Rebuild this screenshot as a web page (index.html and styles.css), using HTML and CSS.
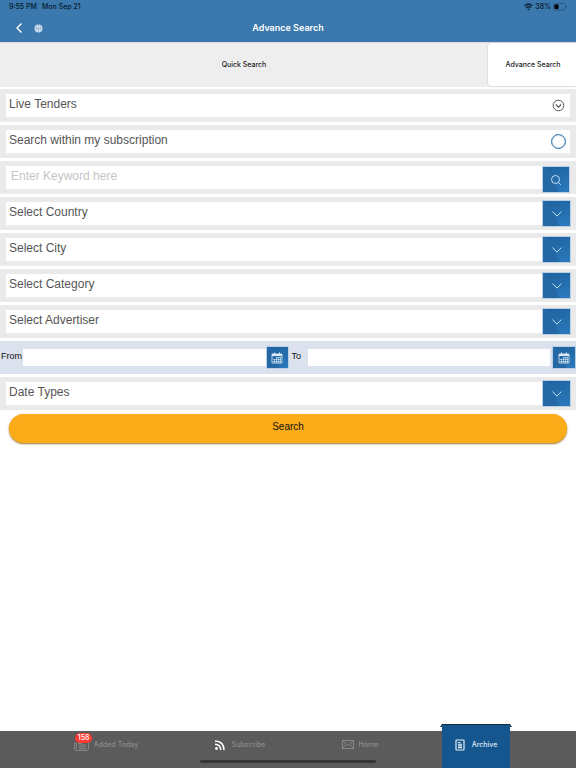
FILE: index.html
```html
<!DOCTYPE html>
<html lang="en">
<head>
<meta charset="utf-8">
<meta name="viewport" content="width=device-width, initial-scale=1">
<title>Advance Search</title>
<link rel="stylesheet" href="styles.css">
</head>
<body>
<svg class="defs" aria-hidden="true">
  <symbol id="chevron" viewBox="0 0 12 8"><path d="M1.500 1.500L6 6l4.500-4.500" fill="none" stroke="currentColor"/></symbol>
  <symbol id="calendar" viewBox="0 0 12 12">
    <path d="M1 2h10v9H1z" fill="none" stroke="currentColor" stroke-width=".8"/>
    <path d="M1 2h10v2H1zM3 .5h1V2H3zM8 .5h1V2H8z" fill="currentColor"/>
    <path d="M5.500 5.500H10M2 7.500h8M2 9.500h8M3.500 7v4M5.500 5v6M7.500 5v6M9.500 5v6" stroke="currentColor" stroke-width=".6"/>
  </symbol>
</svg>
<header class="top">
  <div class="status">
    <span>9:55 PM</span><span>Mon Sep 21</span>
    <span class="power">
      <svg width="9" height="8" viewBox="0 0 9 8" fill="none" stroke="#10283d" stroke-width="1.500"><path d="M.7 3Q4.500-.8 8.300 3M2.200 4.800Q4.500 2.600 6.800 4.800"/><path d="M4.500 7.500L3.200 6Q4.500 5 5.800 6z" fill="#10283d" stroke="none"/></svg>
      <span>38%</span>
      <svg width="15" height="8" viewBox="0 0 15 8"><rect x=".5" y=".5" width="12" height="6.500" rx="2" fill="none" stroke="#2b587f"/><rect x="1.500" y="1.500" width="4" height="4.500" rx=".8" fill="#000"/><path d="M13.500 2.500q1.500 1.200 0 2.500z" fill="#2b587f"/></svg>
    </span>
  </div>
  <div class="nav">
    <button class="plain" aria-label="Back"><svg width="8" height="12" viewBox="0 0 8 12"><path d="M6.500 1.500L2 6l4.500 4.500" fill="none" stroke="#fff" stroke-width="1.400"/></svg></button>
    <button class="plain" aria-label="Language"><svg width="9" height="9" viewBox="0 0 9 9"><circle cx="4.500" cy="4.500" r="4" fill="#cfdfed"/><path d="M.5 4.500h8M4.500.5v8M2 1.200Q3.500 4.500 2 7.800M7 1.200Q5.500 4.500 7 7.800" fill="none" stroke="#8fb3d2" stroke-width=".6"/></svg></button>
    <h1>Advance Search</h1>
  </div>
</header>
<nav class="tabs">
  <a href="#quick">Quick Search</a>
  <a href="#advance" class="on">Advance Search</a>
</nav>
<form class="form">
  <div class="row">
    <div class="box">
      <select aria-label="Tender status"><option>Live Tenders</option></select>
      <svg class="ring" width="13" height="13" viewBox="0 0 13 13" fill="none" stroke="#555"><circle cx="6.500" cy="6.500" r="5.300"/><path d="M3.800 5.500l2.700 2.600 2.700-2.600" stroke-width="1.200"/></svg>
    </div>
  </div>
  <div class="row">
    <div class="box">
      <label for="mine">Search within my subscription</label>
      <input type="checkbox" id="mine">
    </div>
  </div>
  <div class="row">
    <div class="box keyword">
      <input type="text" placeholder="Enter Keyword here" aria-label="Keyword">
      <button type="button" class="tile find" aria-label="Find"><svg width="12" height="12" viewBox="0 0 12 12" fill="none" stroke="currentColor"><circle cx="5.500" cy="5.500" r="4"/><path d="M8.300 8.300l2.500 2.500"/></svg></button>
    </div>
  </div>
  <div class="row"><div class="box"><select aria-label="Country"><option>Select Country</option></select><span class="tile"><svg width="12" height="8"><use href="#chevron"/></svg></span></div></div>
  <div class="row"><div class="box"><select aria-label="City"><option>Select City</option></select><span class="tile"><svg width="12" height="8"><use href="#chevron"/></svg></span></div></div>
  <div class="row"><div class="box"><select aria-label="Category"><option>Select Category</option></select><span class="tile"><svg width="12" height="8"><use href="#chevron"/></svg></span></div></div>
  <div class="row"><div class="box"><select aria-label="Advertiser"><option>Select Advertiser</option></select><span class="tile"><svg width="12" height="8"><use href="#chevron"/></svg></span></div></div>
  <div class="dates">
    <label for="from">From</label>
    <input type="text" id="from">
    <button type="button" class="tile pick" aria-label="Pick start date"><svg width="12" height="12"><use href="#calendar"/></svg></button>
    <label for="to" class="to">To</label>
    <input type="text" id="to">
    <button type="button" class="tile pick last" aria-label="Pick end date"><svg width="12" height="12"><use href="#calendar"/></svg></button>
  </div>
  <div class="row"><div class="box"><select aria-label="Date type"><option>Date Types</option></select><span class="tile"><svg width="12" height="8"><use href="#chevron"/></svg></span></div></div>
  <button type="submit" class="submit">Search</button>
</form>
<footer class="bar">
  <a href="#today">
    <span class="icon"><svg width="15" height="12" viewBox="0 0 16 13" fill="none" stroke="#8b8b8b"><path d="M2.500 1.500h13v9q0 2-2 2h-11q-2 0-2-2v-6h2v6M5 6.500h8M5 8.500h8M5 10.500h8"/><path d="M5 3h3v2H5z" fill="#8b8b8b"/></svg><span class="count">158</span></span>
    <span>Added Today</span>
  </a>
  <a href="#subscribe" class="feed">
    <svg width="10" height="10" viewBox="0 0 10 10" fill="none" stroke="#fff" stroke-width="1.600"><circle cx="1.500" cy="8.500" r="1.400" fill="#fff" stroke="none"/><path d="M0 4.300Q5.500 4.500 5.700 10M0 1Q8.800 1.200 9 10"/></svg>
    <span>Subscribe</span>
  </a>
  <a href="#home">
    <svg width="12" height="9" viewBox="0 0 12 9" fill="none" stroke="#8b8b8b" stroke-width=".9"><path d="M.5.5h11v8H.5zM.5.500L6 5.500 11.500.5M.5 8.500L4.500 4.200M11.500 8.500L7.500 4.200"/></svg>
    <span>Home</span>
  </a>
  <a href="#archive" class="on">
    <svg width="10" height="12" viewBox="0 0 10 12" fill="none" stroke="#e4ecf4"><rect x="1" y="1" width="8" height="10" rx=".8" stroke-width="1.200"/><path d="M3 3.500h2.500M3 5.200h4M3 6.900h4M3 8.600h4" stroke-width="1.100"/></svg>
    <span>Archive</span>
  </a>
  <span class="handle"></span>
</footer>
</body>
</html>
```
FILE: styles.css
```css
* { box-sizing: border-box; }
body {
  margin: 0;
  min-height: 100vh;
  display: flex;
  flex-direction: column;
  background: #fff;
  color: #555;
  font: 12px/20px "Liberation Sans", Arial, sans-serif;
}
a { color: inherit; text-decoration: none; }
svg { display: block; flex: none; }
button, input, select { font: inherit; color: inherit; border: 0; border-radius: 0; padding: 0; margin: 0; }
.defs { position: absolute; width: 0; height: 0; }

.top { height: 42px; background: #3a78ae; font-family: Inter, sans-serif; }
.status {
  display: flex;
  gap: 5px;
  height: 14px;
  padding: 0 8px 0 9px;
  font-size: 7px;
  line-height: 14px;
  font-weight: 500;
  color: #081a2a;
}
.power { display: flex; align-items: center; gap: 2px; margin-left: auto; }
.nav { position: relative; display: flex; align-items: center; gap: 11px; height: 28px; padding: 0 15px; }
.plain { background: none; }
.nav h1 {
  position: absolute;
  inset: 0;
  margin: 0;
  pointer-events: none;
  text-align: center;
  color: #fff;
  font-size: 9px;
  line-height: 28px;
  font-weight: 600;
}

.tabs { display: flex; height: 45px; background: #eee; border-top: 1px solid #dcdcdc; font: 500 7px/43px Inter, sans-serif; text-align: center; color: #222; }
.tabs a { flex: 1; }
.tabs .on {
  flex: 0 0 88px;
  height: 43px;
  padding-left: 2px;
  background: #fff;
  border-radius: 4px 0 0 4px;
  box-shadow: 0 0 2px #bbb;
}

.form { display: flex; flex-direction: column; gap: 3px; padding-top: 2px; font-size: 12px; }
.row { padding: 5px 6px; background: #eaeaea; }
.box { display: flex; align-items: center; height: 23px; background: #fff; }
.box label, .box select, .box input[type="text"] {
  flex: 1;
  min-width: 0;
  height: 23px;
  padding: 0 3px 3px;
  line-height: 20px;
  background: none;
  appearance: none;
}
.box input[type="text"] { padding-left: 5px; }
.box input::placeholder { color: #c4c4c4; opacity: 1; }
.ring { margin-right: 5px; }
.box input[type="checkbox"] {
  width: 15px;
  height: 15px;
  margin-right: 4px;
  appearance: none;
  border: 1px solid #2c71af;
  border-radius: 50%;
  box-shadow: inset 0 0 1px #2c71af;
}
.tile {
  flex: none;
  display: grid;
  place-items: center;
  width: 29px;
  height: 27px;
  margin-right: -1px;
  border: 1px solid #b9d0e4;
  background: linear-gradient(65deg, #2469a5 38%, transparent 46%), linear-gradient(160deg, #1d619d, #2c7bbd);
  color: #c4daed;
  pointer-events: none;
}
.keyword { align-items: flex-start; }
.find { width: 28px; margin-right: 0; pointer-events: auto; }

.dates {
  display: flex;
  align-items: center;
  height: 33px;
  background: #dbe1ed;
  color: #111;
  font-size: 9px;
}
.dates label { flex: none; width: 22px; padding-left: 1px; line-height: 30px; height: 33px; }
.dates .to { width: 18px; padding-left: 3px; }
.dates input { flex: 1; min-width: 0; height: 17px; margin-left: 1px; background: #fff; }
.pick { width: 23px; height: 23px; margin: 0; color: #dceaf5; pointer-events: auto; }
.pick.last { width: 24px; margin-left: 2px; }

.submit {
  height: 29px;
  margin: 1px 9px 0;
  padding-bottom: 3px;
  border-radius: 15px;
  background: #fbac18;
  box-shadow: 0 1px 2px #9c7431;
  color: #111;
  font-size: 10px;
}

.bar {
  position: relative;
  display: grid;
  grid-template-columns: 132fr 136fr 104fr 98px;
  height: 37px;
  padding: 0 66px 0 40px;
  margin-top: auto;
  background: #5b5b5b;
  color: #8b8b8b;
  font: 500 7px/12px Inter, sans-serif;
}
.bar a { display: flex; align-items: center; justify-content: center; gap: 5px; padding-bottom: 10px; }
.bar .feed { gap: 7px; }
.bar .on {
  position: relative;
  justify-self: end;
  width: 68px;
  height: 44px;
  gap: 7px;
  margin-top: -7px;
  padding-bottom: 3px;
  background: #16568f;
  color: #dfe9f3;
}
.bar .on::before {
  content: "";
  position: absolute;
  left: -2px;
  right: -2px;
  top: 0;
  height: 3px;
  background: #172b3e;
  clip-path: polygon(2px 0, calc(100% - 2px) 0, 100% 100%, calc(100% - 2px) 100%, calc(100% - 2px) 1px, 2px 1px, 2px 100%, 0 100%);
}
.icon { position: relative; }
.count {
  position: absolute;
  left: 1px;
  top: -6px;
  padding: 0 3px;
  border-radius: 5px;
  background: #fb3a31;
  color: #fff;
  font-size: 7px;
  line-height: 10px;
}
.handle {
  position: absolute;
  left: 50%;
  bottom: 5px;
  width: 176px;
  height: 3px;
  margin-left: -88px;
  border-radius: 2px;
  background: #373737;
}
```
